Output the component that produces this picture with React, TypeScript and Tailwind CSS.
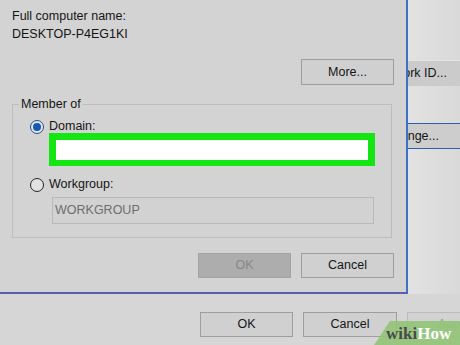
import React from 'react';

const font = { fontFamily: '"Liberation Sans", Arial, sans-serif' };

function Btn({ label, disabled, className = '' }: { label: string; disabled?: boolean; className?: string }) {
  return (
    <div
      className={`flex h-[25px] w-[93px] items-center justify-center border text-[12.5px] ${
        disabled ? 'border-[#a4a4a4] bg-[#adadad] text-[#878787]' : 'border-[#9e9e9e] bg-[#d0d0d0] text-[#151515]'
      } ${className}`}
    >
      {label}
    </div>
  );
}

function Radio({ checked }: { checked?: boolean }) {
  return (
    <div
      className={`flex h-[14px] w-[14px] items-center justify-center rounded-full border ${
        checked ? 'border-[#1d4f98] bg-[#e8e8e8]' : 'border-[#222] bg-[#e2e2e2]'
      }`}
    >
      {checked && <div className="h-[8px] w-[8px] rounded-full bg-[#1459b8]" />}
    </div>
  );
}

export default function App() {
  return (
    <div className="relative h-[345px] w-[460px] overflow-hidden bg-[#d6d6d6] text-[#151515]" style={font}>
      <div className="flex h-[294px]">
        {/* Computer Name dialog */}
        <div className="flex h-[294px] w-[408px] shrink-0 flex-col border-r-2 border-b-2 border-r-[#3b74c4] border-b-[#5a5eac] bg-[#d3d3d3] pl-[12px] pr-[12px]">
          <div className="mt-[9px] h-[15px] text-[12.5px] leading-[15px]">Full computer name:</div>
          <div className="mt-[3px] h-[15px] text-[12.5px] leading-[15px]">DESKTOP-P4EG1KI</div>

          <div className="mt-[17px] flex justify-end">
            <Btn label="More..." className="h-[26px]" />
          </div>

          {/* Member of group */}
          <div className="relative mt-[19px] h-[134px] w-[380px] border border-[#bdbdbd] pl-[17px] pt-[15px]">
            <span className="absolute -top-[8px] left-[6px] bg-[#d3d3d3] px-[2px] text-[12.5px] leading-[15px]">
              Member of
            </span>
            <div className="flex h-[13px] items-center gap-[5px] text-[12.5px] leading-[13px]">
              <Radio checked />
              <span>Domain:</span>
            </div>
            <div className="ml-[19px] h-[33px] w-[326px] border-[7px] border-b-[6px] border-[#14e614] bg-white" />
            <div className="mt-[11px] flex h-[15px] items-center gap-[5px] text-[12.5px] leading-[15px]">
              <Radio />
              <span>Workgroup:</span>
            </div>
            <div className="ml-[22px] mt-[5px] flex h-[27px] w-[322px] items-center border border-[#b9b9b9] bg-[#d2d2d2] pl-[2px] text-[12.5px] text-[#6e6e6e]">
              WORKGROUP
            </div>
          </div>

          <div className="mt-[15px] flex justify-end gap-[10px]">
            <Btn label="OK" disabled />
            <Btn label="Cancel" />
          </div>
        </div>

        {/* background window, right edge */}
        <div className="flex flex-1 flex-col overflow-hidden bg-gradient-to-r from-[#e2e2e2] to-[#d9d9d9] pt-[60px]">
          <div className="-ml-[68px] flex h-[26px] w-[120px] shrink-0 items-center justify-end border-t border-[#e4e4e4] bg-[#cbcbcb] pr-[13px] text-[12.5px]">
            Network ID...
          </div>
          <div className="-ml-[68px] mt-[37px] flex h-[26px] w-[120px] shrink-0 items-center justify-end border-y border-[#2c5fae] bg-[#cdcdcd] pr-[21px] text-[12.5px]">
            Change...
          </div>
        </div>
      </div>

      {/* background window, bottom buttons */}
      <div className="flex gap-[10px] pl-[200px] pt-[18px]">
        <Btn label="OK" className="shrink-0" />
        <Btn label="Cancel" className="shrink-0 w-[94px]" />
        <div className="flex h-[25px] w-[93px] shrink-0 items-center justify-center border border-[#bcbcbc] bg-[#d2d2d2] text-[12.5px] text-[#9a9a9a]">
          Apply
        </div>
      </div>

      {/* wikiHow badge */}
      <div className="absolute bottom-0 right-0 h-[24px] w-[86px]">
        <svg className="absolute inset-0" width="86" height="24" viewBox="0 0 86 24">
          <polygon points="0,24 16,0 86,0 86,24" fill="#92c47a" fillOpacity="0.92" />
        </svg>
        <span
          className="absolute left-[12px] top-[3px] text-[17px] font-bold leading-[20px]"
          style={{ fontFamily: '"Liberation Serif", "Times New Roman", serif' }}
        >
          <span className="text-[#4a4a4a]">wiki</span>
          <span className="text-white">How</span>
        </span>
      </div>
    </div>
  );
}
